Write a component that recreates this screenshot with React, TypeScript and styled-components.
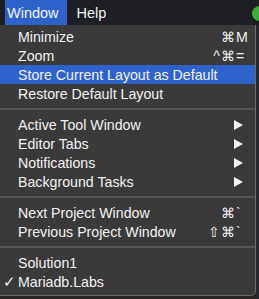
import React from 'react';
import styled, { createGlobalStyle } from 'styled-components';

const GlobalStyle = createGlobalStyle`
  html, body {
    margin: 0;
    padding: 0;
    background: #1c1b1a;
    overflow: hidden;
  }
  body {
    font-family: "Liberation Sans", Arial, sans-serif;
  }
`;

const Screen = styled.div`
  width: 259px;
  height: 299px;
  display: flex;
  flex-direction: column;
  position: relative;
  background: #2a2622;
`;

const MenuBar = styled.div`
  height: 25px;
  display: flex;
  align-items: stretch;
  padding-left: 5px;
  background: #1e1f24;
  color: #e8e8e8;
  font-size: 14.5px;
`;

const BarItem = styled.div<{ $active?: boolean }>`
  display: flex;
  align-items: center;
  padding: ${(p) => (p.$active ? '0 8px 0 2px' : '0 8px 0 0')};
  margin-right: ${(p) => (p.$active ? '10px' : '0')};
  background: ${(p) => (p.$active ? '#2f63cc' : 'transparent')};
  color: #f4f4f4;
`;

const StatusDot = styled.div`
  position: absolute;
  top: 6px;
  right: -8px;
  width: 15px;
  height: 15px;
  border-radius: 50%;
  background: #3fae3a;
`;

const Body = styled.div`
  flex: 1;
  display: flex;
`;

const Menu = styled.div`
  width: 256px;
  height: 271px;
  box-sizing: border-box;
  padding-top: 2px;
  background: #3a3a3b;
  border-right: 1px solid #6b6b6b;
  border-bottom: 1px solid #6b6b6b;
  border-bottom-right-radius: 5px;
  color: #f2f2f2;
  font-size: 14.2px;
  display: flex;
  flex-direction: column;
`;

const Side = styled.div`
  flex: 1;
  background: #26282b;
`;

const Row = styled.div<{ $highlight?: boolean }>`
  height: 19px;
  display: flex;
  align-items: center;
  padding: 0 5px 0 18px;
  position: relative;
  background: ${(p) => (p.$highlight ? '#2f63cc' : 'transparent')};
`;

const Check = styled.span`
  position: absolute;
  left: 3px;
  font-size: 15px;
`;

const Label = styled.span`
  flex: 1;
  white-space: nowrap;
`;

const Mods = styled.span`
  white-space: nowrap;
  letter-spacing: 1px;
`;

const Key = styled.span`
  width: 14px;
  white-space: nowrap;
`;

const Arrow = styled.span`
  width: 0;
  height: 0;
  margin-right: 7px;
  border-top: 5px solid transparent;
  border-bottom: 5px solid transparent;
  border-left: 9px solid #f2f2f2;
`;

const Separator = styled.div`
  height: 12px;
  display: flex;
  align-items: center;
  &::after {
    content: '';
    flex: 1;
    height: 2px;
    background: #555657;
  }
`;

type Item =
  | { kind: 'sep' }
  | {
      kind: 'item';
      label: string;
      mods?: string;
      keyChar?: string;
      submenu?: boolean;
      highlight?: boolean;
      checked?: boolean;
    };

const items: Item[] = [
  { kind: 'item', label: 'Minimize', mods: '⌘', keyChar: 'M' },
  { kind: 'item', label: 'Zoom', mods: '^⌘', keyChar: '=' },
  { kind: 'item', label: 'Store Current Layout as Default', highlight: true },
  { kind: 'item', label: 'Restore Default Layout' },
  { kind: 'sep' },
  { kind: 'item', label: 'Active Tool Window', submenu: true },
  { kind: 'item', label: 'Editor Tabs', submenu: true },
  { kind: 'item', label: 'Notifications', submenu: true },
  { kind: 'item', label: 'Background Tasks', submenu: true },
  { kind: 'sep' },
  { kind: 'item', label: 'Next Project Window', mods: '⌘', keyChar: '`' },
  { kind: 'item', label: 'Previous Project Window', mods: '⇧⌘', keyChar: '`' },
  { kind: 'sep' },
  { kind: 'item', label: 'Solution1' },
  { kind: 'item', label: 'Mariadb.Labs', checked: true },
];

export default function App() {
  return (
    <Screen>
      <GlobalStyle />
      <MenuBar>
        <BarItem $active>Window</BarItem>
        <BarItem>Help</BarItem>
      </MenuBar>
      <StatusDot />
      <Body>
        <Menu>
          {items.map((it, i) =>
            it.kind === 'sep' ? (
              <Separator key={i} />
            ) : (
              <Row key={i} $highlight={it.highlight}>
                {it.checked && <Check>✓</Check>}
                <Label>{it.label}</Label>
                {it.keyChar && (
                  <>
                    <Mods>{it.mods}</Mods>
                    <Key>{it.keyChar}</Key>
                  </>
                )}
                {it.submenu && <Arrow />}
              </Row>
            )
          )}
        </Menu>
        <Side />
      </Body>
    </Screen>
  );
}
